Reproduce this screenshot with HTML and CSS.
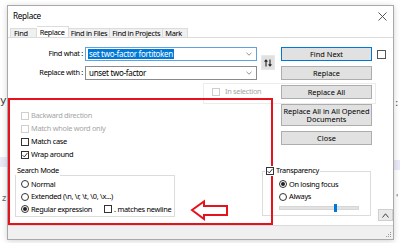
FILE: index.html
```html
<!DOCTYPE html>
<html lang="en">
<head>
    <meta charset="UTF-8">
    <title>Replace</title>
    <link rel="stylesheet" href="styles.css">
</head>
<body>
    <div class="desk">
        <span class="stray stray-y">y</span>
        <span class="stray stray-z">z</span>
        <span class="stray stray-colon">:</span>
        <span class="stray stray-tick">'</span>
        <span class="band band-left"></span>
        <span class="band band-right"></span>
    </div>

    <div class="dialog">
        <div class="titlebar">
            <span class="title">Replace</span>
            <svg class="close" width="9" height="9" viewBox="0 0 9 9">
                <path d="M0.5 0.5 L8.5 8.5 M8.5 0.5 L0.5 8.5" stroke="#444" stroke-width="0.9"/>
            </svg>
        </div>

        <div class="tabs">
            <span class="tab">Find</span>
            <span class="tab active">Replace</span>
            <span class="tab">Find in Files</span>
            <span class="tab">Find in Projects</span>
            <span class="tab">Mark</span>
        </div>

        <div class="panel">
            <div class="left">
                <div class="field">
                    <label>Find what :</label>
                    <div class="combo focus">
                        <span class="selected">set two-factor fortitoken</span>
                        <svg class="chevron" width="6" height="4" viewBox="0 0 6 4"><path d="M0.5 0.8 L3 3.2 L5.5 0.8" fill="none" stroke="#777" stroke-width="0.8"/></svg>
                    </div>
                </div>
                <div class="field">
                    <label>Replace with :</label>
                    <div class="combo">
                        <span class="value">unset two-factor</span>
                        <svg class="chevron" width="6" height="4" viewBox="0 0 6 4"><path d="M0.5 0.8 L3 3.2 L5.5 0.8" fill="none" stroke="#777" stroke-width="0.8"/></svg>
                    </div>
                </div>

                <div class="in-selection">
                    <span class="box off"></span>
                    <span class="dim">In selection</span>
                </div>

                <div class="options">
                    <div class="option dim"><span class="box off"></span>Backward direction</div>
                    <div class="option dim"><span class="box off"></span>Match whole word only</div>
                    <div class="option"><span class="box"></span>Match case</div>
                    <div class="option">
                        <span class="box"><svg width="6" height="6" viewBox="0 0 6 6"><path d="M0.6 3.2 L2.3 4.9 L5.5 0.9" fill="none" stroke="#222" stroke-width="0.9"/></svg></span>Wrap around
                    </div>
                </div>

                <div class="group-title mode-title">Search Mode</div>
                <div class="group mode">
                    <div class="option"><span class="radio"></span>Normal</div>
                    <div class="option"><span class="radio"></span>Extended (\n, \r, \t, \0, \x...)</div>
                    <div class="option">
                        <span class="radio on"></span>Regular expression
                        <span class="box newline"></span>. matches newline
                    </div>
                </div>
            </div>

            <div class="right">
                <div class="actions">
                    <button class="swap">
                        <svg width="8" height="8" viewBox="0 0 8 8">
                            <path d="M2 7.5 V1 M0.6 2.6 L2 1 L3.4 2.6 M6 0.5 V7 M4.6 5.4 L6 7 L7.4 5.4" fill="none" stroke="#222" stroke-width="1.1"/>
                        </svg>
                    </button>
                    <div class="buttons">
                        <button class="btn default">Find Next</button>
                        <button class="btn">Replace</button>
                        <button class="btn">Replace All</button>
                        <button class="btn tall">Replace All in All Opened Documents</button>
                        <button class="btn">Close</button>
                    </div>
                    <span class="box side"></span>
                </div>

                <div class="lower">
                    <div class="transp">
                        <div class="group-title transp-title">
                            <span class="box"><svg width="6" height="6" viewBox="0 0 6 6"><path d="M0.6 3.2 L2.3 4.9 L5.5 0.9" fill="none" stroke="#222" stroke-width="0.9"/></svg></span>Transparency
                        </div>
                        <div class="group transp-box">
                            <div class="option"><span class="radio on"></span>On losing focus</div>
                            <div class="option"><span class="radio"></span>Always</div>
                            <div class="slider"><span class="thumb"></span></div>
                        </div>
                    </div>
                    <button class="collapse">
                        <svg width="7" height="5" viewBox="0 0 7 5"><path d="M0.5 4.5 L3.5 0.8 L6.5 4.5" fill="none" stroke="#333" stroke-width="0.9"/></svg>
                    </button>
                </div>
            </div>
        </div>

        <div class="statusbar">
            <svg class="grip" width="6" height="6" viewBox="0 0 6 6">
                <rect x="4" y="0" width="1" height="1" fill="#999"/>
                <rect x="2" y="2" width="1" height="1" fill="#999"/>
                <rect x="4" y="2" width="1" height="1" fill="#999"/>
                <rect x="0" y="4" width="1" height="1" fill="#999"/>
                <rect x="2" y="4" width="1" height="1" fill="#999"/>
                <rect x="4" y="4" width="1" height="1" fill="#999"/>
            </svg>
        </div>
    </div>

    <!-- annotation drawn over the screenshot -->
    <div class="mark-box"></div>
    <svg class="mark-arrow" width="40" height="22" viewBox="0 0 40 22">
        <path d="M2 11 L14 2.5 L14 7 L37 7 L37 16 L14 16 L14 20 Z" fill="none" stroke="#e5141c" stroke-width="2" stroke-linejoin="miter"/>
    </svg>
</body>
</html>
```

FILE: styles.css
```css
:root {
    --line: #dcdcdc;
    --button: #e1e1e1;
    --button-border: #adadad;
    --accent: #0078d7;
    --dim: #a6a6a6;
    --mark: #e5141c;
}

* {
    box-sizing: border-box;
    margin: 0;
    padding: 0;
}

body {
    position: relative;
    width: 400px;
    height: 243px;
    overflow: hidden;
    background: #fff;
    color: #000;
    font-family: "Noto Sans", "Open Sans", sans-serif;
    font-size: 7.4px;
    letter-spacing: -0.3px;
    line-height: 1;
    white-space: nowrap;
}

/* editor text behind the dialog */
.stray {
    position: absolute;
    font-family: "DejaVu Sans", sans-serif;
    letter-spacing: 0;
    color: #444;
}

.stray-y { left: 0; top: 95px; font-size: 11px; }
.stray-z { left: 2px; top: 195px; font-size: 8px; color: #666; }
.stray-colon { left: 395px; top: 98px; font-size: 10px; }
.stray-tick { left: 396px; top: 195px; font-size: 8px; }

.band {
    position: absolute;
    height: 10px;
    background: #e9e9f8;
}

.band-left { left: 0; top: 157px; width: 10px; }
.band-right { left: 390px; top: 160px; width: 10px; }

/* dialog window */
.dialog {
    position: relative;
    display: flex;
    flex-direction: column;
    width: 387px;
    height: 235px;
    margin: 5px 0 0 7px;
    background: #fff;
    border: 1px solid #a9a9a9;
    box-shadow: 0 1px 6px rgba(0, 0, 0, 0.18);
}

.titlebar {
    display: flex;
    align-items: center;
    justify-content: space-between;
    height: 21px;
    padding: 0 6px 0 5px;
}

.title {
    font-size: 8.2px;
}

.tabs {
    display: flex;
    align-items: flex-end;
    height: 11px;
    padding-left: 2px;
    border-bottom: 1px solid var(--line);
}

.tab {
    height: 9px;
    padding: 0 2px;
    background: #f0f0f0;
    border: 1px solid var(--line);
    border-bottom: none;
    border-left: none;
    line-height: 8px;
}

.tab:first-child {
    border-left: 1px solid var(--line);
    padding: 0 8px 0 3px;
}

.tab:last-child {
    padding-right: 5px;
}

.tab.active {
    height: 11px;
    padding: 0 3px;
    background: #fff;
    line-height: 10px;
}

.panel {
    display: flex;
    flex: 1;
}

.left {
    width: 253px;
    padding-top: 9px;
}

.field {
    display: flex;
    align-items: center;
    gap: 2px;
    height: 14px;
    margin-bottom: 5px;
}

.field label {
    width: 75px;
    text-align: right;
}

.combo {
    display: flex;
    align-items: center;
    justify-content: space-between;
    width: 172px;
    height: 14px;
    padding: 0 4px 0 2px;
    border: 1px solid #8a8a8a;
    font-size: 8px;
}

.combo.focus {
    border-color: #5fa2dd;
}

.selected {
    padding: 1px 1px;
    background: var(--accent);
    color: #fff;
}

.value {
    padding-left: 1px;
}

.in-selection {
    display: flex;
    align-items: center;
    gap: 3px;
    width: 173px;
    height: 21px;
    margin: -2px 0 0 195px;
    padding: 0 0 3px 8px;
    border: 1px solid #ececec;
}

.dim {
    color: var(--dim);
}

.box {
    display: inline-flex;
    align-items: center;
    justify-content: center;
    width: 8px;
    height: 8px;
    margin-right: 2px;
    border: 1px solid #333;
    background: #fff;
    flex-shrink: 0;
}

.box.off {
    border-color: #cfcfcf;
}

.radio {
    display: inline-flex;
    align-items: center;
    justify-content: center;
    width: 8px;
    height: 8px;
    margin-right: 2px;
    border: 1px solid #333;
    border-radius: 50%;
    flex-shrink: 0;
}

.radio.on::after {
    content: "";
    width: 4px;
    height: 4px;
    border-radius: 50%;
    background: #222;
}

.options {
    margin-top: 5px;
    padding-left: 13px;
}

.option {
    display: flex;
    align-items: center;
    height: 13px;
}

.group-title {
    position: relative;
    z-index: 1;
    display: flex;
    align-items: center;
    width: fit-content;
    height: 10px;
    padding: 0 1px;
    background: #fff;
}

.mode-title {
    margin: 5px 0 -1px 8px;
}

.group {
    border: 1px solid var(--line);
}

.mode {
    width: 160px;
    height: 42px;
    margin-left: 7px;
    padding: 2px 0 0 5px;
}

.mode .option {
    height: 12.5px;
}

.box.newline {
    margin-left: 12px;
}

.right {
    width: 132px;
    padding-top: 9px;
}

.actions {
    display: flex;
    align-items: flex-start;
}

button {
    font: inherit;
    color: #000;
    cursor: pointer;
}

.swap {
    display: flex;
    align-items: center;
    justify-content: center;
    width: 14px;
    height: 15px;
    margin: 8px 6px 0 0;
    background: var(--button);
    border: 1px solid #e8e8e8;
}

.buttons {
    display: flex;
    flex-direction: column;
    gap: 5px;
    width: 91px;
}

.btn {
    height: 14px;
    background: var(--button);
    border: 1px solid var(--button-border);
    line-height: 1.1;
}

.btn.default {
    border-color: var(--accent);
}

.btn.tall {
    height: 22px;
    padding: 0;
    white-space: normal;
}

.box.side {
    width: 9px;
    height: 9px;
    margin: 3px 0 0 5px;
    border-color: #555;
}

.lower {
    display: flex;
    align-items: flex-start;
    margin-top: 21px;
}

.transp {
    width: 109px;
    margin-left: 1px;
}

.transp-title {
    margin: 0 0 -5px 3px;
}

.transp-box {
    height: 45px;
    padding: 6px 0 0 16px;
}

.transp-box .option {
    height: 12.5px;
}

.slider {
    position: relative;
    width: 80px;
    height: 8px;
    margin-top: 1px;
    display: flex;
    align-items: center;
}

.slider::before {
    content: "";
    width: 100%;
    height: 2px;
    background: #e2e2e2;
    border: 1px solid #d6d6d6;
}

.thumb {
    position: absolute;
    left: 55px;
    top: 0;
    width: 3px;
    height: 8px;
    background: var(--accent);
}

.collapse {
    display: flex;
    align-items: center;
    justify-content: center;
    width: 15px;
    height: 12px;
    margin: 43px 0 0 7px;
    background: #eaeaea;
    border: 1px solid #cfcfcf;
}

.statusbar {
    display: flex;
    align-items: flex-end;
    justify-content: flex-end;
    height: 14px;
    padding: 0 1px 1px 0;
    background: #f0f0f0;
    border-top: 1px solid #dadada;
}

/* red annotation */
.mark-box {
    position: absolute;
    left: 8px;
    top: 98px;
    width: 265px;
    height: 127px;
    border: 2px solid var(--mark);
}

.mark-arrow {
    position: absolute;
    left: 190px;
    top: 199px;
}
```
